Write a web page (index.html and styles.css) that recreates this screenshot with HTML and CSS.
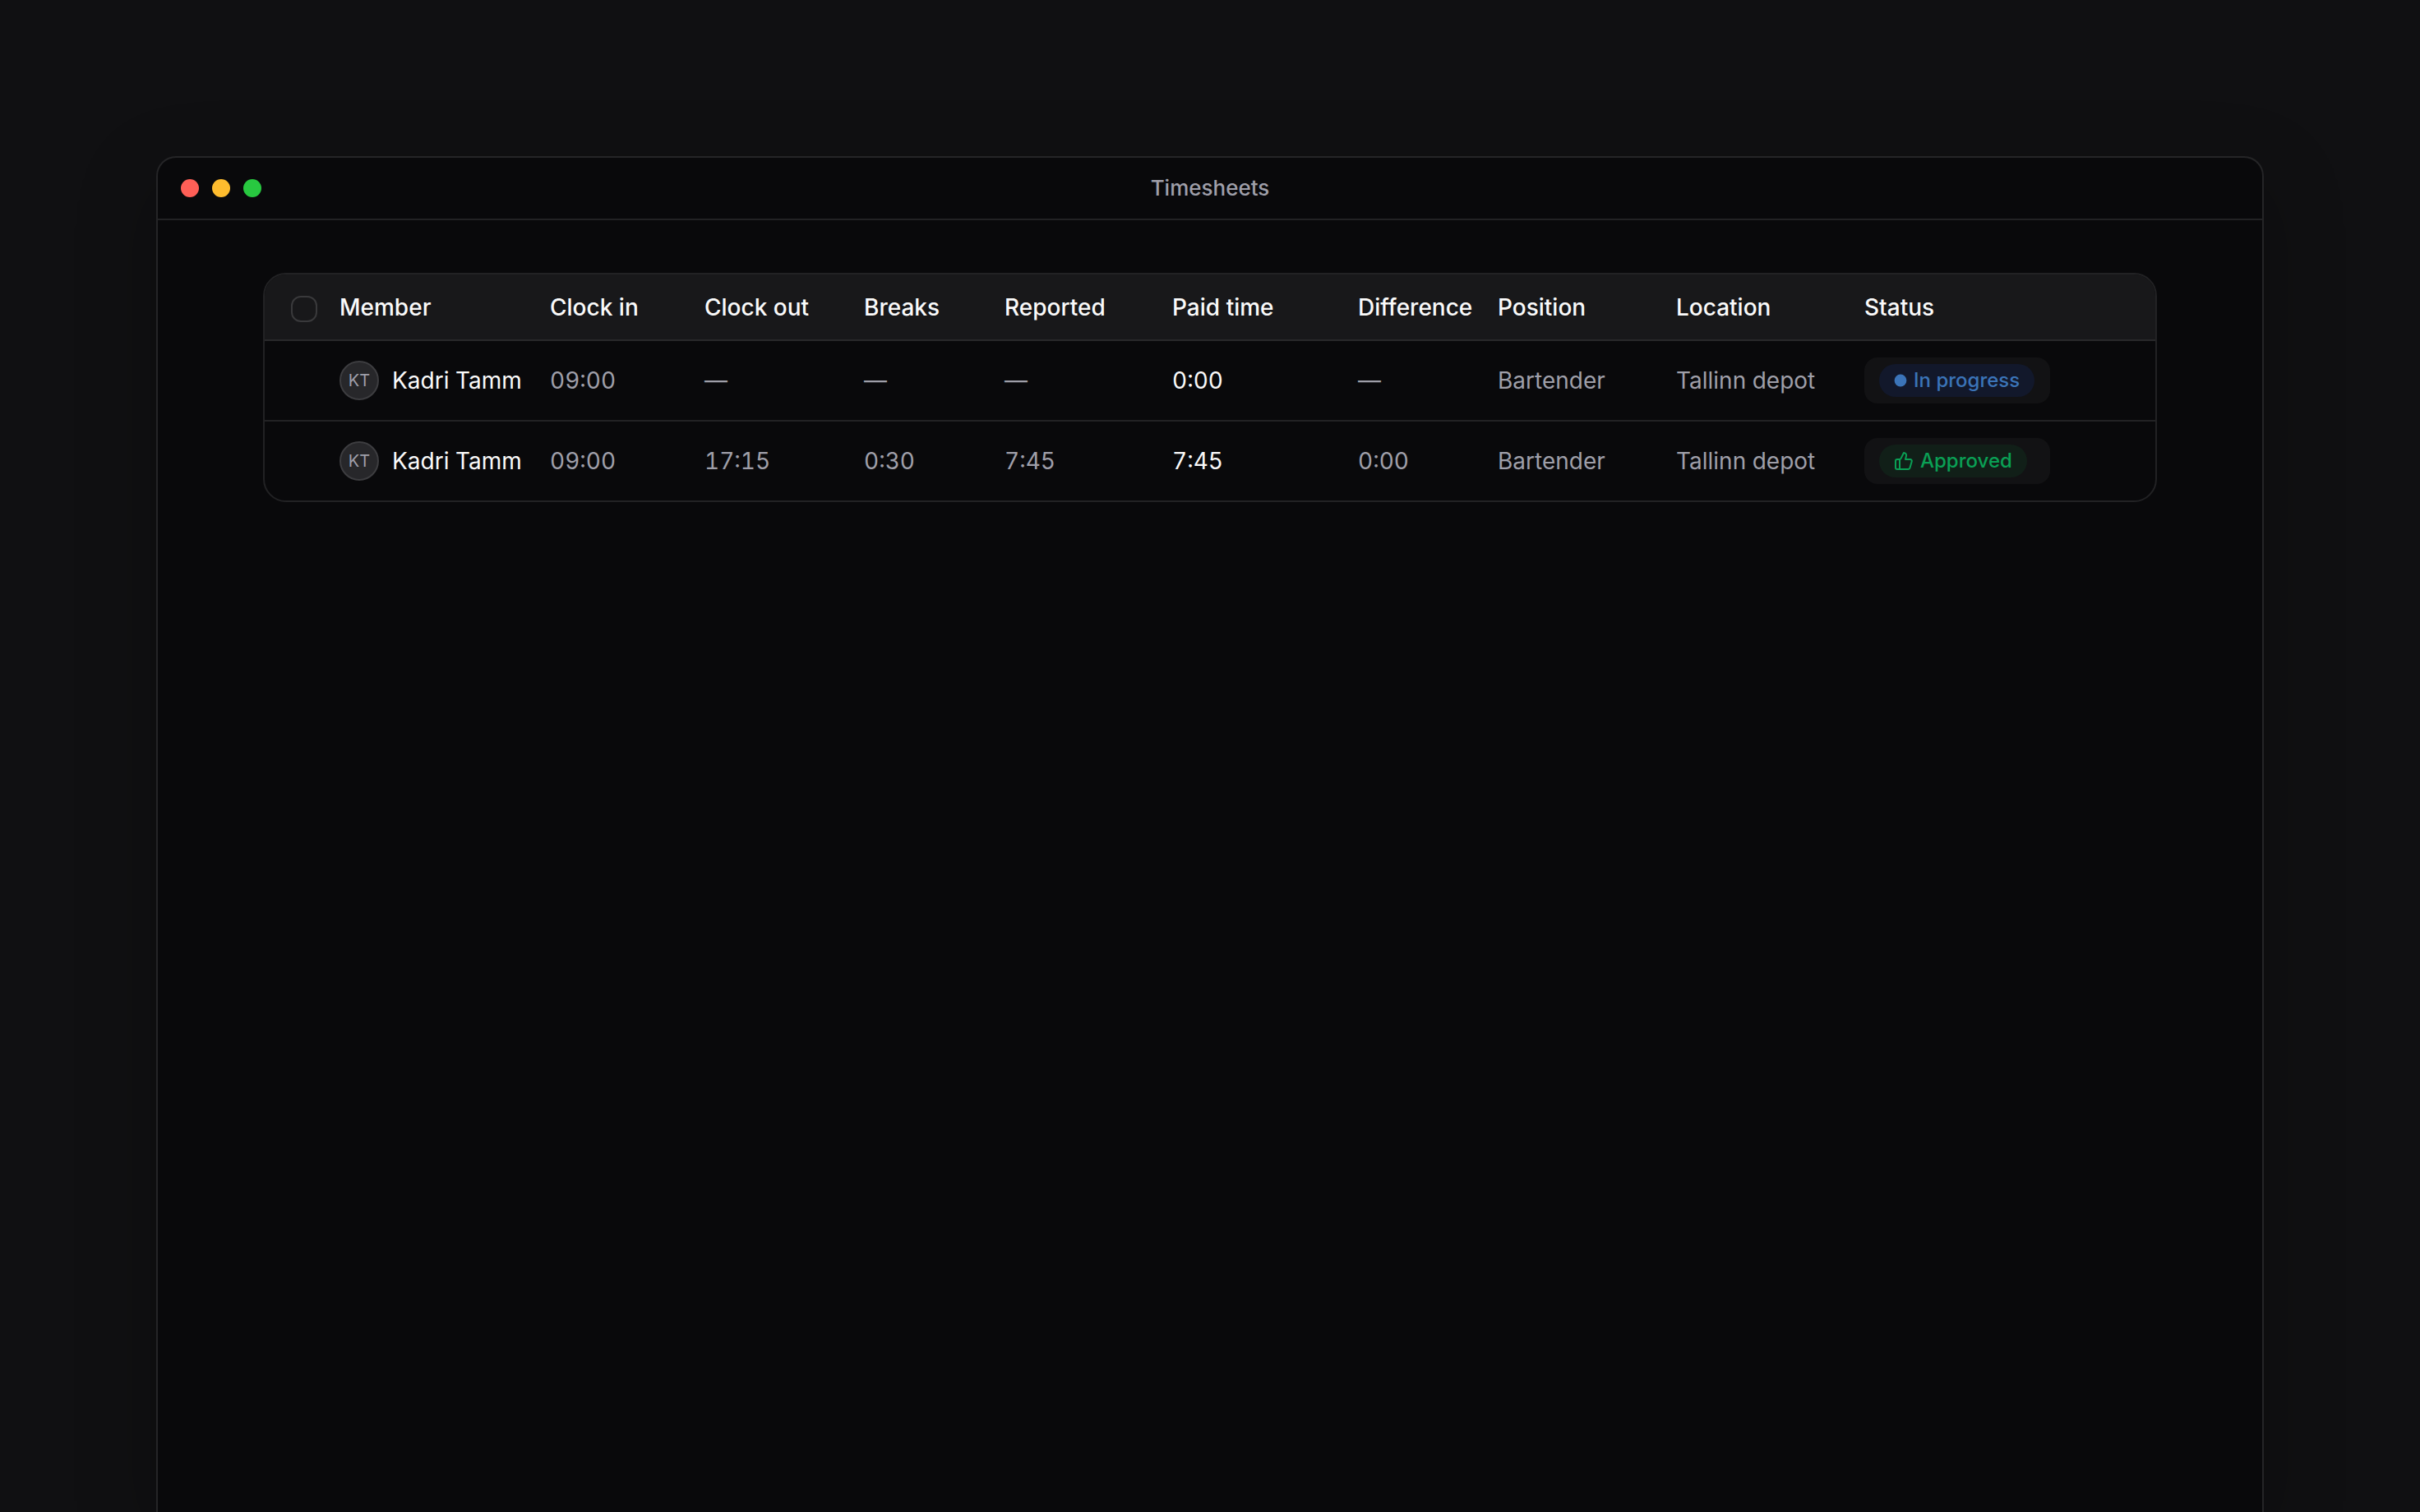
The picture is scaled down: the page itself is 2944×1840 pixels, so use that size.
FILE: index.html
```html
<!DOCTYPE html>
<html lang="en">
<head>
<meta charset="utf-8">
<title>Timesheets</title>
<link rel="stylesheet" href="styles.css">
</head>
<body>
<main class="window">
  <header class="titlebar">
    <div class="lights" aria-hidden="true">
      <span class="light light-close"></span>
      <span class="light light-minimize"></span>
      <span class="light light-zoom"></span>
    </div>
    <h1 class="title">Timesheets</h1>
  </header>
  <section class="content">
    <div class="card">
      <table class="sheet">
        <colgroup>
          <col class="col-select"><col class="col-member"><col class="col-in"><col class="col-out"><col class="col-breaks"><col class="col-reported"><col class="col-paid"><col class="col-difference"><col class="col-position"><col class="col-location"><col>
        </colgroup>
        <thead>
          <tr>
            <th class="select" scope="col"><input class="checkbox" type="checkbox" aria-label="Select all"></th>
            <th scope="col">Member</th>
            <th scope="col">Clock in</th>
            <th scope="col">Clock out</th>
            <th scope="col">Breaks</th>
            <th scope="col">Reported</th>
            <th scope="col">Paid time</th>
            <th scope="col">Difference</th>
            <th scope="col">Position</th>
            <th scope="col">Location</th>
            <th scope="col">Status</th>
          </tr>
        </thead>
        <tbody>
          <tr>
            <td></td>
            <td><div class="member"><span class="avatar">KT</span><span class="strong">Kadri Tamm</span></div></td>
            <td>09:00</td>
            <td>—</td>
            <td>—</td>
            <td>—</td>
            <td class="strong">0:00</td>
            <td>—</td>
            <td>Bartender</td>
            <td>Tallinn depot</td>
            <td>
              <button class="status" type="button"><span class="badge badge-progress"><svg class="dot" viewBox="0 0 16 16" aria-hidden="true"><circle cx="8" cy="8" r="7.4" fill="currentColor"/></svg>In progress</span></button>
            </td>
          </tr>
          <tr>
            <td></td>
            <td><div class="member"><span class="avatar">KT</span><span class="strong">Kadri Tamm</span></div></td>
            <td>09:00</td>
            <td>17:15</td>
            <td>0:30</td>
            <td>7:45</td>
            <td class="strong">7:45</td>
            <td>0:00</td>
            <td>Bartender</td>
            <td>Tallinn depot</td>
            <td>
              <button class="status" type="button"><span class="badge badge-approved"><svg class="thumb" viewBox="0 0 24 24" fill="none" stroke="currentColor" stroke-width="2" stroke-linecap="round" stroke-linejoin="round" aria-hidden="true"><path d="M7 10v12"/><path d="M15 5.88 14 10h5.83a2 2 0 0 1 1.92 2.56l-2.33 8A2 2 0 0 1 17.5 22H4a2 2 0 0 1-2-2v-8a2 2 0 0 1 2-2h2.76a2 2 0 0 0 1.79-1.11L12 2a3.13 3.13 0 0 1 3 3.88Z"/></svg>Approved</span></button>
            </td>
          </tr>
        </tbody>
      </table>
    </div>
  </section>
</main>
</body>
</html>
```

FILE: styles.css
```css
* {
  box-sizing: border-box;
}

body {
  display: flex;
  min-height: 100vh;
  margin: 0;
  padding: 190px 190px 0;
  background: #101012;
  color: #9f9fa9;
  font-family: Inter, sans-serif;
  font-size: 28px;
  line-height: 40px;
}

.window {
  flex: 1;
  min-width: 0;
  border: 2px solid #252527;
  border-bottom: 0;
  border-radius: 24px 24px 0 0;
  background: #09090b;
  box-shadow: 0 32px 96px rgba(0, 0, 0, 0.25);
}

.titlebar {
  display: grid;
  grid-template-columns: 1fr auto 1fr;
  align-items: center;
  height: 76px;
  padding: 0 28px;
  border-bottom: 2px solid #222224;
}

.lights {
  display: flex;
  gap: 16px;
}

.light {
  width: 22px;
  height: 22px;
  border-radius: 50%;
}

.light-close {
  background: #ff5f57;
}

.light-minimize {
  background: #febc2e;
}

.light-zoom {
  background: #28c840;
}

.title {
  margin: 0;
  font-size: 26px;
  font-weight: 500;
}

.content {
  padding: 64px 128px;
}

.card {
  overflow: hidden;
  border: 2px solid #222224;
  border-radius: 28px;
}

.sheet {
  width: 100%;
  table-layout: fixed;
  border-spacing: 0;
  font-variant-numeric: tabular-nums;
}

.col-select { width: 75px; }
.col-member { width: 256px; }
.col-in { width: 188px; }
.col-out { width: 194px; }
.col-breaks { width: 171px; }
.col-reported { width: 204px; }
.col-paid { width: 226px; }
.col-difference { width: 170px; }
.col-position { width: 217px; }
.col-location { width: 229px; }

th,
td {
  padding: 0 16px;
  text-align: left;
  vertical-align: middle;
  white-space: nowrap;
}

th {
  height: 81px;
  border-bottom: 2px solid #29292b;
  background: #18181a;
  color: #fafafa;
  font-weight: 500;
}

td {
  height: 96px;
}

tbody tr + tr td {
  height: 98px;
  border-top: 2px solid #222224;
}

th.select {
  padding: 5px 0 0 32px;
}

.checkbox {
  display: block;
  width: 32px;
  height: 32px;
  margin: 0;
  appearance: none;
  border: 2px solid #39393b;
  border-radius: 12px;
}

.checkbox:checked {
  background: #fafafa;
}

.member {
  display: flex;
  align-items: center;
  gap: 16px;
}

.avatar {
  display: flex;
  align-items: center;
  justify-content: center;
  width: 48px;
  height: 48px;
  border: 2px solid #3d3d40;
  border-radius: 50%;
  background: #27272a;
  font-size: 20px;
}

.strong {
  color: #fafafa;
}

.status {
  display: flex;
  align-items: center;
  width: 226px;
  height: 56px;
  padding: 0 18px;
  border: 0;
  border-radius: 16px;
  background: #121214;
  font-family: inherit;
  cursor: pointer;
}

.badge {
  display: flex;
  align-items: center;
  gap: 8px;
  height: 40px;
  padding: 0 18px;
  border-radius: 20px;
  font-size: 24px;
  font-weight: 500;
  line-height: 32px;
}

.badge-progress {
  background: #12182b;
  color: #3b74b8;
}

.badge-approved {
  background: #111f18;
  color: #0aa055;
}

.dot {
  width: 16px;
  height: 16px;
}

.thumb {
  width: 24px;
  height: 24px;
}
```
